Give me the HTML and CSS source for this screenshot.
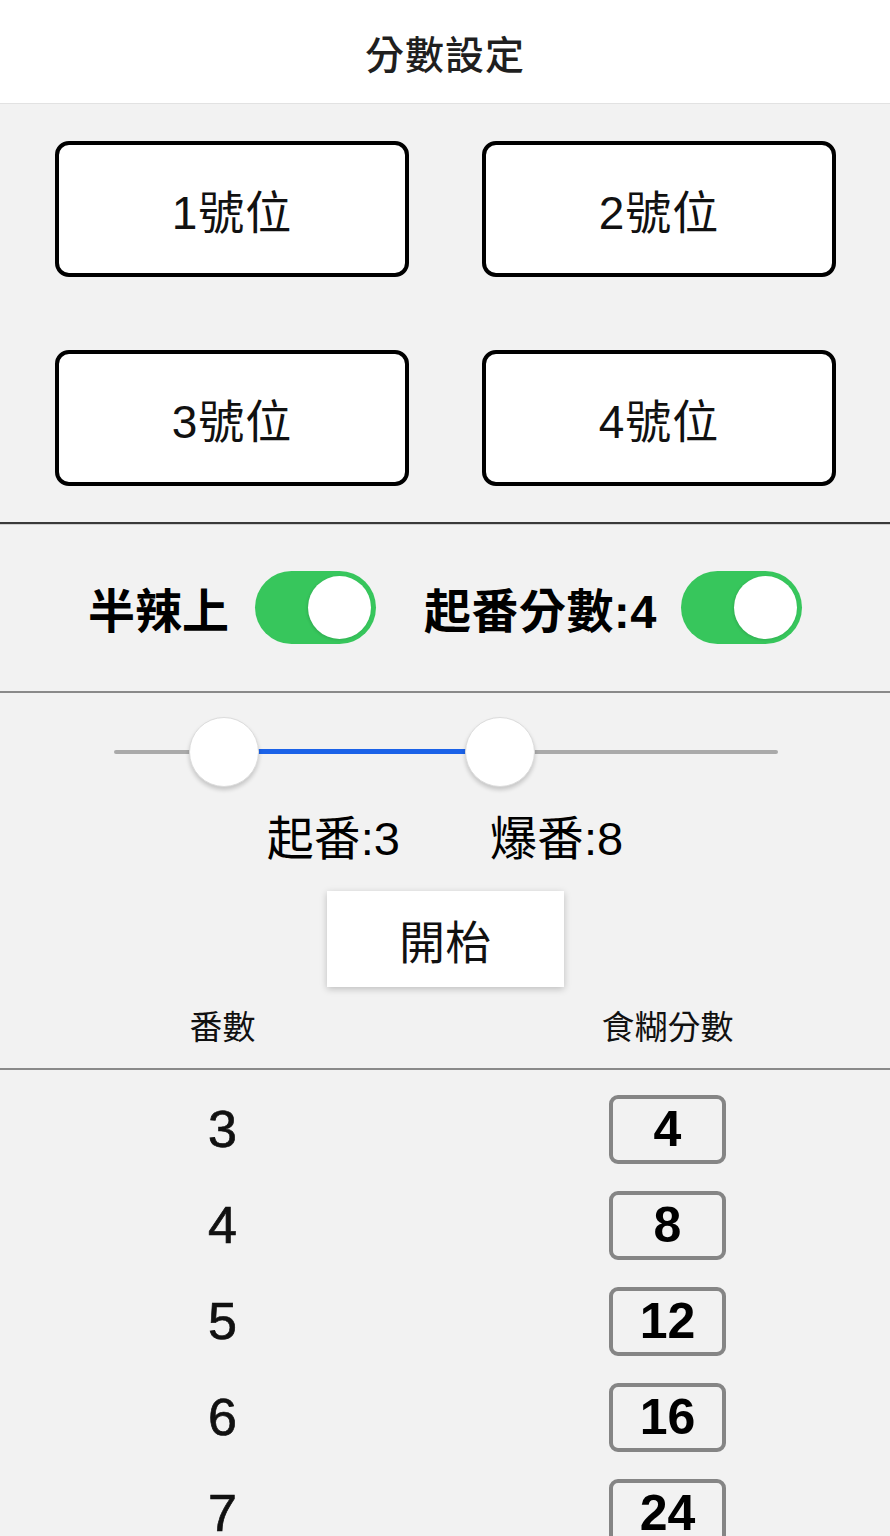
FILE: index.html
```html
<!DOCTYPE html>
<html lang="zh-Hant">
<head>
<meta charset="utf-8">
<title>分數設定</title>
<link rel="stylesheet" href="styles.css">
</head>
<body>
<header class="topbar"><h1 class="title">分數設定</h1></header>

<section class="seats">
  <button class="seat">1號位</button>
  <button class="seat">2號位</button>
  <button class="seat">3號位</button>
  <button class="seat">4號位</button>
</section>

<section class="switches">
  <span class="sw-label">半辣上</span>
  <span class="toggle"><span class="knob"></span></span>
  <span class="sw-label sw-second">起番分數:4</span>
  <span class="toggle"><span class="knob"></span></span>
</section>

<section class="range">
  <div class="slider">
    <div class="track"></div>
    <div class="fill"></div>
    <div class="thumb thumb-a"></div>
    <div class="thumb thumb-b"></div>
  </div>
  <div class="range-labels">
    <span>起番:3</span>
    <span>爆番:8</span>
  </div>
  <button class="start">開枱</button>
</section>

<section class="table">
  <div class="thead">
    <span>番數</span>
    <span>食糊分數</span>
  </div>
  <div class="tbody">
    <div class="row"><span class="fan">3</span><span class="cell"><span class="score">4</span></span></div>
    <div class="row"><span class="fan">4</span><span class="cell"><span class="score">8</span></span></div>
    <div class="row"><span class="fan">5</span><span class="cell"><span class="score">12</span></span></div>
    <div class="row"><span class="fan">6</span><span class="cell"><span class="score">16</span></span></div>
    <div class="row"><span class="fan">7</span><span class="cell"><span class="score">24</span></span></div>
  </div>
</section>
</body>
</html>
```

FILE: styles.css
```css
* { box-sizing: border-box; }
html, body {
  margin: 0;
  padding: 0;
  background: #f2f2f2;
  font-family: "Liberation Sans", "Noto Sans CJK TC", sans-serif;
  color: #000;
  overflow: hidden;
  height: 1536px;
}
.topbar {
  background: #fff;
  height: 104px;
  border-bottom: 1px solid #e2e2e2;
  display: flex;
  align-items: center;
  justify-content: center;
}
.title {
  margin: 0;
  font-size: 39px;
  font-weight: 500;
  color: #1f1f1f;
  letter-spacing: 1px;
}
.seats {
  display: grid;
  grid-template-columns: 354px 354px;
  column-gap: 73px;
  row-gap: 73px;
  padding: 37px 0 36px 55px;
  border-bottom: 2px solid #3a3a3a;
  box-shadow: 0 1px 0 #d0d0d0;
}
.seat {
  height: 136px;
  background: #fff;
  border: 4px solid #000;
  border-radius: 14px;
  font-family: "Liberation Sans", "Noto Sans CJK TC", sans-serif;
  font-size: 46px;
  letter-spacing: 1px;
  color: #111;
  padding: 0;
}
.switches {
  height: 169px;
  display: flex;
  align-items: center;
  justify-content: center;
  border-bottom: 2px solid #8a8a8a;
}
.sw-label {
  font-size: 47px;
  font-weight: 700;
  margin-right: 26px;
}
.sw-second { margin-left: 48px; margin-right: 24px; letter-spacing: 0.5px; }
.toggle {
  width: 121px;
  height: 73px;
  border-radius: 37px;
  background: #37c65c;
  position: relative;
  display: inline-block;
}
.knob {
  position: absolute;
  right: 5px;
  top: 5px;
  width: 63px;
  height: 63px;
  border-radius: 50%;
  background: #fff;
  box-shadow: -1px 1px 3px rgba(0,0,0,0.12);
}
.range {
  display: flex;
  flex-direction: column;
  align-items: center;
}
.slider {
  position: relative;
  width: 664px;
  height: 100px;
  margin-top: 5px;
  margin-left: 1px;
}
.track {
  position: absolute;
  left: 0;
  right: 0;
  top: 52px;
  height: 4px;
  border-radius: 2px;
  background: #aaaaaa;
}
.fill {
  position: absolute;
  left: 110px;
  width: 276px;
  top: 51px;
  height: 5px;
  background: #1b62e8;
}
.thumb {
  position: absolute;
  top: 19px;
  width: 70px;
  height: 70px;
  border-radius: 50%;
  background: #fff;
  border: 1px solid #dcdcdc;
  box-shadow: 0 3px 4px rgba(0,0,0,0.18);
}
.thumb-a { left: 75px; }
.thumb-b { left: 351px; }
.range-labels {
  display: flex;
  gap: 90px;
  font-size: 47px;
  line-height: 60px;
  margin-top: 11px;
}
.start {
  margin-top: 22px;
  width: 237px;
  height: 96px;
  background: #fff;
  border: none;
  box-shadow: 0 2px 7px rgba(0,0,0,0.22);
  font-family: "Liberation Sans", "Noto Sans CJK TC", sans-serif;
  font-size: 46px;
  color: #111;
  padding: 0;
}
.thead {
  display: grid;
  grid-template-columns: 1fr 1fr;
  text-align: center;
  font-size: 33px;
  height: 83px;
  padding-top: 18px;
  line-height: 46px;
  border-bottom: 2px solid #8a8a8a;
  color: #111;
}
.tbody { padding-top: 11px; }
.row {
  display: grid;
  grid-template-columns: 1fr 1fr;
  height: 96px;
  align-items: center;
  text-align: center;
}
.fan {
  font-size: 52px;
  color: #111;
  -webkit-text-stroke: 0.7px #111;
}
.cell { display: flex; justify-content: center; }
.score {
  width: 117px;
  height: 69px;
  border: 4px solid #858585;
  border-radius: 9px;
  font-size: 50px;
  font-weight: 700;
  line-height: 61px;
  text-align: center;
  color: #000;
}
```
